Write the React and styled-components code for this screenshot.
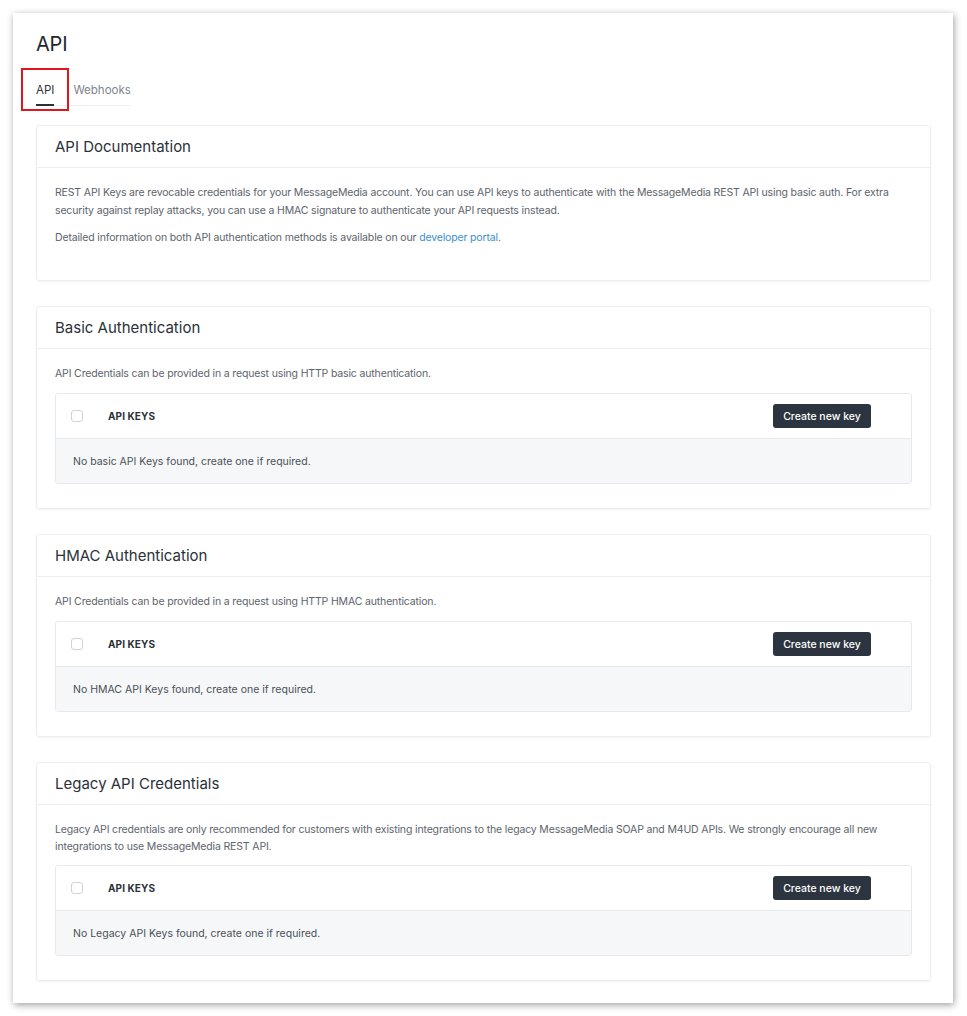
import styled, { createGlobalStyle } from 'styled-components';

const GlobalStyle = createGlobalStyle`
    * {
        box-sizing: border-box;
    }
    body {
        margin: 0;
        background: #ffffff;
        font-family: Inter, "Noto Sans", sans-serif;
        color: #333a42;
    }
`

const Page = styled.div`
    padding: 13px 14px 14px 13px;
`

const Frame = styled.div`
    background: #fff;
    padding: 17px 22px 22px 23px;
    box-shadow: 1px 2px 7px rgba(0, 0, 0, 0.38);
`

const PageTitle = styled.h1`
    margin: 0;
    font-size: 20px;
    font-weight: 400;
    line-height: 28px;
    color: #22272d;
    letter-spacing: -0.2px;
`

const TabBar = styled.div`
    display: inline-flex;
    gap: 19px;
    margin-top: 24px;
    border-bottom: 1px solid #eceef1;
`

const Tab = styled.div`
    position: relative;
    font-size: 11.5px;
    line-height: 16px;
    padding: 0 0 6px;
    color: ${props => props.active ? '#2b3138' : '#7d848c'};
    border-bottom: 2px solid ${props => props.active ? '#2b3138' : 'transparent'};
    margin-bottom: -1px;
`

const Highlight = styled.span`
    position: absolute;
    left: -15px;
    right: -15px;
    top: -14px;
    bottom: -7px;
    border: 2px solid #e3141b;
    pointer-events: none;
`

const Cards = styled.div`
    display: flex;
    flex-direction: column;
    gap: 25px;
    margin-top: 19px;
`

const Card = styled.section`
    border: 1px solid #eceef0;
    border-radius: 3px;
    box-shadow: 0 1px 2px rgba(0, 0, 0, 0.05);
`

const CardHeader = styled.h2`
    margin: 0;
    padding: 0 18px;
    height: 42px;
    display: flex;
    align-items: center;
    font-size: 15px;
    font-weight: 400;
    color: #2b3138;
    border-bottom: 1px solid #eceef0;
`

const CardBody = styled.div`
    padding: 16px 18px 24px 18px;
`

const Text = styled.p`
    margin: 0 0 ${props => props.gap || 9}px;
    font-size: 10.5px;
    line-height: ${props => props.lh || 18}px;
    letter-spacing: -0.15px;
    color: #5d646c;
`

const Link = styled.a`
    color: #3a8fcf;
    text-decoration: none;
`

const Table = styled.div`
    border: 1px solid #e7e9ec;
    border-radius: 3px;
    overflow: hidden;
`

const HeadRow = styled.div`
    height: 45px;
    display: flex;
    align-items: center;
    padding: 0 40px 0 15px;
    border-bottom: 1px solid #e7e9ec;
`

const Checkbox = styled.span`
    width: 12px;
    height: 12px;
    border: 1px solid #cfd3d8;
    border-radius: 3px;
    background: #fff;
`

const ColTitle = styled.span`
    margin-left: 25px;
    flex: 1;
    font-size: 10px;
    font-weight: 700;
    color: #2b3138;
    letter-spacing: 0.1px;
`

const Button = styled.button`
    height: 24px;
    width: 98px;
    border: none;
    border-radius: 3px;
    background: #2c353f;
    color: #fff;
    font-family: inherit;
    font-size: 10.5px;
    font-weight: 500;
    cursor: pointer;
`

const EmptyRow = styled.div`
    height: 44px;
    display: flex;
    align-items: center;
    padding: 0 17px;
    background: #f6f7f9;
    font-size: 10.5px;
    color: #4a5058;
`

function KeysTable({ empty }) {
  return (
    <Table>
        <HeadRow>
            <Checkbox />
            <ColTitle>API KEYS</ColTitle>
            <Button>Create new key</Button>
        </HeadRow>
        <EmptyRow>{empty}</EmptyRow>
    </Table>
  )
}

function App() {
  return (
    <Page>
        <GlobalStyle />
        <Frame>
            <PageTitle>API</PageTitle>
            <TabBar>
                <Tab active>API<Highlight /></Tab>
                <Tab>Webhooks</Tab>
            </TabBar>
            <Cards>
                <Card>
                    <CardHeader>API Documentation</CardHeader>
                    <CardBody>
                        <Text>REST API Keys are revocable credentials for your MessageMedia account. You can use API keys to authenticate with the MessageMedia REST API using basic auth. For extra security against replay attacks, you can use a HMAC signature to authenticate your API requests instead.</Text>
                        <Text gap={9}>Detailed information on both API authentication methods is available on our <Link href="#">developer portal</Link>.</Text>
                    </CardBody>
                </Card>
                <Card>
                    <CardHeader>Basic Authentication</CardHeader>
                    <CardBody>
                        <Text gap={10}>API Credentials can be provided in a request using HTTP basic authentication.</Text>
                        <KeysTable empty="No basic API Keys found, create one if required." />
                    </CardBody>
                </Card>
                <Card>
                    <CardHeader>HMAC Authentication</CardHeader>
                    <CardBody>
                        <Text gap={10}>API Credentials can be provided in a request using HTTP HMAC authentication.</Text>
                        <KeysTable empty="No HMAC API Keys found, create one if required." />
                    </CardBody>
                </Card>
                <Card>
                    <CardHeader>Legacy API Credentials</CardHeader>
                    <CardBody>
                        <Text gap={10} lh={17}>Legacy API credentials are only recommended for customers with existing integrations to the legacy MessageMedia SOAP and M4UD APIs. We strongly encourage all new integrations to use MessageMedia REST API.</Text>
                        <KeysTable empty="No Legacy API Keys found, create one if required." />
                    </CardBody>
                </Card>
            </Cards>
        </Frame>
    </Page>
  )
}

export default App
